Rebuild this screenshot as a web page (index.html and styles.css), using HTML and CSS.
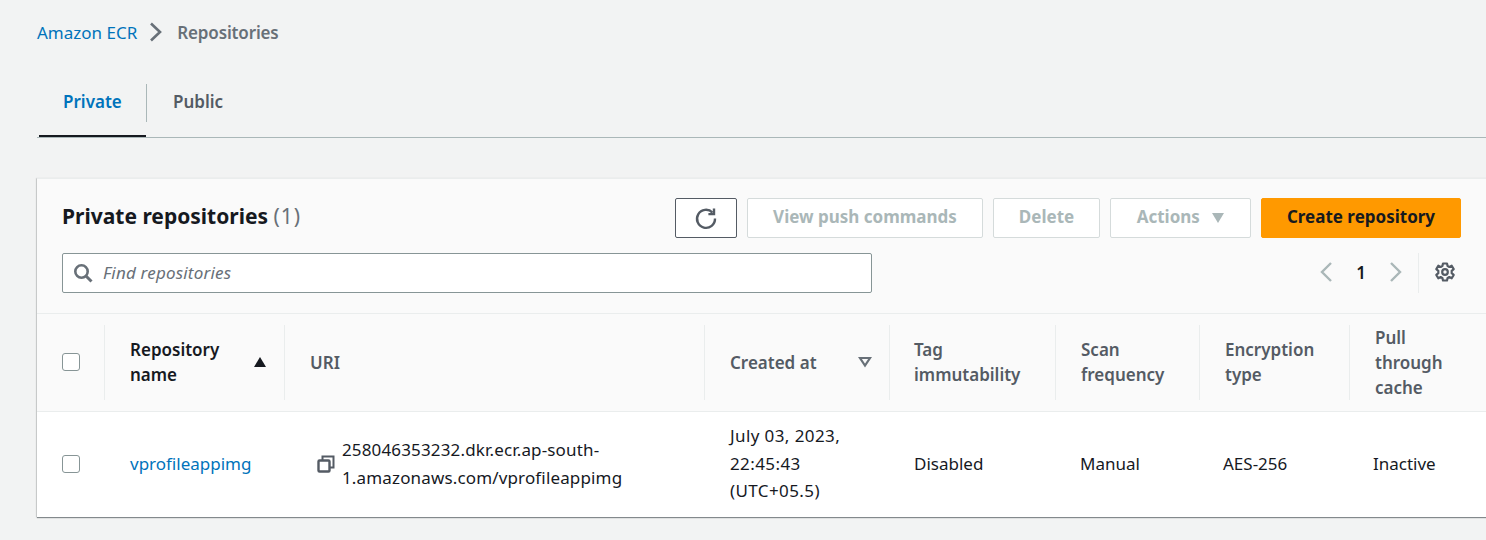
FILE: index.html
```html
<!DOCTYPE html>
<html lang="en">
<head>
    <meta charset="UTF-8">
    <title>Repositories</title>
    <link rel="stylesheet" href="styles.css">
</head>
<body>

    <nav class="breadcrumb">
        <a href="#">Amazon ECR</a>
        <svg class="crumb-sep" width="16" height="20" viewBox="0 0 16 20"><path d="M3 1.5l9 8.5-9 8.5" fill="none" stroke="#687078" stroke-width="2.6"/></svg>
        <span>Repositories</span>
    </nav>

    <div class="tabs">
        <div class="tab tab-active"><span class="tab-label">Private</span></div>
        <div class="tab"><span class="tab-label">Public</span></div>
    </div>

    <section class="card">
        <div class="card-head">
            <div class="title-row">
                <h2>Private repositories <span class="count">(1)</span></h2>
                <div class="actions">
                    <button class="btn btn-icon">
                        <svg width="24" height="24" viewBox="0 0 24 24"><path d="M18.5 6.6A9 9 0 1 0 21 12.5" fill="none" stroke="#545b64" stroke-width="2.4"/><path d="M20 2.5v5.6h-5.6" fill="none" stroke="#545b64" stroke-width="2.4"/></svg>
                    </button>
                    <button class="btn btn-disabled btn-push">View push commands</button>
                    <button class="btn btn-disabled btn-delete">Delete</button>
                    <button class="btn btn-disabled btn-actions">Actions <i class="caret"></i></button>
                    <button class="btn btn-primary">Create repository</button>
                </div>
            </div>
            <div class="filter-row">
                <div class="search">
                    <svg width="20" height="20" viewBox="0 0 20 20"><circle cx="8.5" cy="8.5" r="6.2" fill="none" stroke="#687078" stroke-width="2.6"/><path d="M13 13l5.5 5.5" stroke="#687078" stroke-width="3"/></svg>
                    <span class="placeholder">Find repositories</span>
                </div>
                <div class="pager">
                    <svg class="pager-item" width="14" height="22" viewBox="0 0 14 22"><path d="M12 2L3 11l9 9" fill="none" stroke="#aab7b8" stroke-width="2.4"/></svg>
                    <span class="page-no pager-item">1</span>
                    <svg class="pager-item" width="14" height="22" viewBox="0 0 14 22"><path d="M2 2l9 9-9 9" fill="none" stroke="#aab7b8" stroke-width="2.4"/></svg>
                    <div class="pager-sep">
                        <svg class="pager-item" width="22" height="22" viewBox="0 0 22 22"><path d="M9 2.5h4l.6 2.6 1.7.8 2.4-1.2 2 3.4-2 1.7v2.4l2 1.7-2 3.4-2.4-1.2-1.7.8-.6 2.6H9l-.6-2.6-1.7-.8-2.4 1.2-2-3.4 2-1.7V9.8l-2-1.7 2-3.4 2.4 1.2 1.7-.8z" fill="none" stroke="#545b64" stroke-width="2.2" stroke-linejoin="round"/><circle cx="11" cy="11" r="2.8" fill="none" stroke="#545b64" stroke-width="2.2"/></svg>
                    </div>
                </div>
            </div>
        </div>

        <table class="repo-table">
            <colgroup>
                <col class="c-check"><col class="c-name"><col class="c-uri"><col class="c-created"><col class="c-tag"><col class="c-scan"><col class="c-enc"><col class="c-pull">
            </colgroup>
            <thead>
                <tr>
                    <th><span class="th-inner th-check"><i class="checkbox"></i></span></th>
                    <th class="sorted"><span class="th-inner"><span class="th-text">Repository name</span><i class="sort-up"></i></span></th>
                    <th><span class="th-inner">URI</span></th>
                    <th><span class="th-inner"><span class="th-text">Created at</span>
                        <svg class="sort-down" width="14" height="12" viewBox="0 0 14 12"><path d="M2 2h10l-5 7.5z" fill="none" stroke="#687078" stroke-width="2.2"/></svg></span></th>
                    <th><span class="th-inner th-tag">Tag immutability</span></th>
                    <th><span class="th-inner">Scan frequency</span></th>
                    <th><span class="th-inner">Encryption type</span></th>
                    <th><span class="th-inner th-pull">Pull through cache</span></th>
                </tr>
            </thead>
            <tbody>
                <tr>
                    <td><span class="td-check"><i class="checkbox"></i></span></td>
                    <td class="cell-name"><a href="#">vprofileappimg</a></td>
                    <td class="cell-uri">
                        <div class="uri">
                            <svg width="18" height="18" viewBox="0 0 18 18"><path d="M5.5 5V1.5h11v11H13" fill="none" stroke="#545b64" stroke-width="2"/><rect x="1.5" y="5.5" width="11" height="11" rx="1" fill="none" stroke="#545b64" stroke-width="2.4"/></svg>
                            <span>258046353232.dkr.ecr.ap-south-1.amazonaws.com/vprofileappimg</span>
                        </div>
                    </td>
                    <td class="cell-created">July 03, 2023, 22:45:43 (UTC+05.5)</td>
                    <td class="cell-tag">Disabled</td>
                    <td class="cell-scan">Manual</td>
                    <td class="cell-enc">AES-256</td>
                    <td class="cell-pull">Inactive</td>
                </tr>
            </tbody>
        </table>
    </section>

</body>
</html>
```

FILE: styles.css
```css
html, body {
    height: 540px;
    overflow: hidden;
}
body {
    margin: 0;
    background-color: #f2f3f3;
    font-family: "Noto Sans", Arial, sans-serif;
    font-size: 17px;
    color: #16191f;
}
a {
    color: #0073bb;
    text-decoration: none;
}

.breadcrumb {
    display: flex;
    align-items: center;
    height: 20px;
    padding: 22px 0 0 37px;
    color: #687078;
}
.breadcrumb span {
    font-weight: 600;
    letter-spacing: -0.15px;
}
.crumb-sep {
    margin: 0 13px 0 11px;
}

.tabs {
    display: flex;
    height: 96px;
    margin-left: 37px;
    border-bottom: 1px solid #aab7b8;
    box-sizing: border-box;
}
.tab {
    display: flex;
    align-items: center;
    height: 95px;
    padding-top: 28px;
    box-sizing: border-box;
    border-bottom: 2px solid transparent;
    font-weight: 600;
    color: #545b64;
}
.tab-label {
    display: flex;
    align-items: center;
    height: 36px;
    padding: 0 26px 2px;
    border-left: 1px solid #aab7b8;
}
.tab-active {
    width: 107px;
    margin-left: 2px;
    color: #0073bb;
    border-bottom-color: #16191f;
}
.tab-active .tab-label {
    padding: 0 24px 2px;
    border-left: none;
}

.card {
    width: 1500px;
    margin: 40px 0 0 37px;
    background-color: #fff;
    box-shadow: 0 1px 1px 0 rgba(60, 70, 75, 0.6), -1px 0 1px 0 rgba(60, 70, 75, 0.15);
}
.card-head {
    height: 136px;
    padding: 19px 25px 0;
    box-sizing: border-box;
    background-color: #fafafa;
    border-top: 1px solid #eaeded;
    border-bottom: 1px solid #eaeded;
}
.title-row {
    display: flex;
    width: 1399px;
    justify-content: space-between;
    align-items: center;
    height: 40px;
}
h2 {
    margin: 0;
    padding-bottom: 4px;
    font-size: 21px;
    font-weight: 700;
}
.count {
    font-weight: 400;
    color: #687078;
    letter-spacing: 1px;
}
.actions {
    display: flex;
    gap: 10px;
}
.btn {
    height: 40px;
    box-sizing: border-box;
    border: 1px solid #d5dbdb;
    border-radius: 2px;
    background-color: #fff;
    font-family: inherit;
    font-size: 17px;
    font-weight: 700;
    padding: 0 0 3px;
}
.btn-icon {
    display: flex;
    align-items: center;
    justify-content: center;
    width: 62px;
    padding: 0;
    border-color: #545b64;
}
.btn-disabled {
    color: #aab7b8;
}
.btn-push { width: 236px; }
.btn-delete { width: 107px; }
.btn-actions { width: 141px; }
.caret {
    display: inline-block;
    margin-left: 8px;
    border-left: 6.5px solid transparent;
    border-right: 6.5px solid transparent;
    border-top: 10px solid #aab7b8;
}
.btn-primary {
    width: 200px;
    background-color: #ff9900;
    border-color: #ff9900;
    color: #16191f;
}

.filter-row {
    display: flex;
    width: 1399px;
    justify-content: space-between;
    margin-top: 15px;
}
.search {
    display: flex;
    align-items: center;
    gap: 10px;
    width: 810px;
    height: 40px;
    padding-left: 10px;
    box-sizing: border-box;
    background-color: #fff;
    border: 1px solid #879596;
    border-radius: 2px;
}
.placeholder {
    padding-bottom: 2px;
    font-style: italic;
    color: #687078;
    letter-spacing: 0.2px;
}
.pager {
    display: flex;
    align-items: center;
    height: 40px;
    padding-right: 5px;
    color: #16191f;
}
.pager-item {
    margin-bottom: 2px;
}
.page-no {
    width: 56px;
    text-align: center;
    font-weight: 600;
}
.pager-sep {
    display: flex;
    align-items: center;
    height: 40px;
    margin-left: 15px;
    padding-left: 15px;
    border-left: 1px solid #eaeded;
}

.repo-table {
    table-layout: fixed;
    width: 1449px;
    border-collapse: collapse;
}
.c-check { width: 67px; }
.c-name { width: 180px; }
.c-uri { width: 420px; }
.c-created { width: 185px; }
.c-tag { width: 166px; }
.c-scan { width: 144px; }
.c-enc { width: 150px; }
.c-pull { width: 137px; }

th {
    height: 97px;
    padding: 0;
    background-color: #fafafa;
    border-bottom: 1px solid #eaeded;
    text-align: left;
    font-weight: 600;
    color: #545b64;
    line-height: 25px;
}
th.sorted {
    color: #16191f;
}
.th-inner {
    display: flex;
    align-items: center;
    height: 75px;
    box-sizing: border-box;
    padding: 0 16px 1px 25px;
    border-left: 1px solid #eaeded;
}
th:first-child .th-inner {
    border-left: none;
}
.th-tag {
    padding-left: 24px;
}
.th-text {
    flex: 1;
}
.th-pull {
    padding-right: 30px;
}
.sort-up {
    border-left: 6.5px solid transparent;
    border-right: 6.5px solid transparent;
    border-bottom: 10px solid #16191f;
    margin-right: 2px;
}
.sort-down {
    margin-right: 1px;
}
.checkbox {
    display: block;
    width: 16px;
    height: 16px;
    background-color: #fff;
    border: 1px solid #879596;
    border-radius: 3px;
}

td {
    height: 103px;
    padding: 0 0 2px;
    line-height: 27.5px;
    background-color: #fff;
}
.td-check {
    display: block;
    padding-left: 25px;
}
.cell-name { padding-left: 26px; }
.cell-uri { padding: 0 40px 2px 33px; letter-spacing: 0.15px; }
.cell-created { padding: 0 20px 2px 26px; letter-spacing: 0.4px; }
.cell-tag { padding-left: 25px; }
.cell-scan { padding-left: 25px; }
.cell-enc { padding-left: 24px; }
.cell-pull { padding-left: 24px; }
.uri {
    display: flex;
    align-items: center;
    gap: 7px;
}
.uri svg {
    flex-shrink: 0;
}
```
